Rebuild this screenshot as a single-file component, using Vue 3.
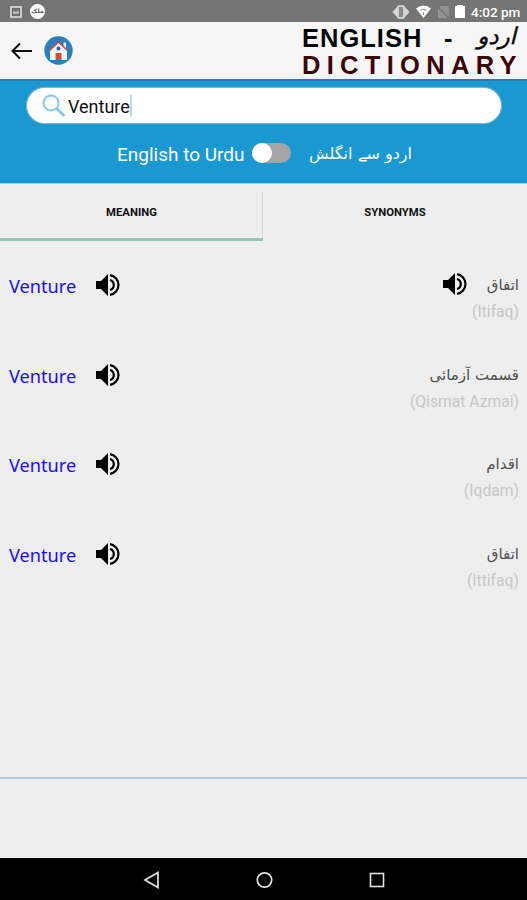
<template>
  <div class="screen">
    <!-- Status bar -->
    <div class="status-bar">
      <div class="status-left">
        <svg class="picture-icon" width="12" height="12" viewBox="0 0 12 12">
          <rect x="1" y="1" width="10" height="10" fill="#6d6d6d" stroke="#dedede" stroke-width="1.6" />
          <path d="M3 8V6l1.500-1.500L6 6l1.500-2L9 6v2z" fill="#b5b5b5" />
        </svg>
        <span class="app-badge">ملک</span>
      </div>
      <div class="status-right">
        <svg width="18" height="14" viewBox="0 0 18 14">
          <path d="M5 2v10L0.500 7zM13 2v10l4.500-5z" fill="#d8d8d8" />
          <rect x="6" y="1" width="6" height="12" rx="1" fill="#8a8a8a" stroke="#e4e4e4" stroke-width="1.600" />
        </svg>
        <svg width="15" height="13" viewBox="0 0 15 13">
          <path d="M0 3.500Q7.500-2.500 15 3.500L7.500 13z" fill="#fff" />
          <path d="M4.500 5.500Q7.500 3 10.500 5.500M7.500 7v3" fill="none" stroke="#999" stroke-width="1.200" />
        </svg>
        <svg width="11" height="12" viewBox="0 0 11 12">
          <path d="M3 0h8v12H0V3z" fill="#919191" />
          <path d="M0 1l11 11" stroke="#747474" stroke-width="1.500" />
        </svg>
        <svg width="10" height="13" viewBox="0 0 10 13">
          <path d="M0 1h2V0h6v1h2v12H0z" fill="#fff" />
        </svg>
        <span class="clock">4:02 pm</span>
      </div>
    </div>

    <!-- Header -->
    <header class="header">
      <svg class="back-icon" width="22" height="18" viewBox="0 0 22 18">
        <path d="M9 1.500L1.500 9 9 16.500M1.500 9H21" fill="none" stroke="#111" stroke-width="2" />
      </svg>
      <svg class="home-icon" width="29" height="29" viewBox="0 0 29 29">
        <circle cx="14.500" cy="14.500" r="14.200" fill="#2a80b9" />
        <path d="M19.500 6.500H22V13h-2.500z" fill="#e8edf4" />
        <path d="M14.500 6.500L6 14v10h17V14z" fill="#f4f6fa" />
        <path d="M5.500 14.500l9-8.500 9 8.500" fill="none" stroke="#c4474d" stroke-width="1.600" />
        <circle cx="14.500" cy="12.500" r="1.900" fill="#1c62bd" />
        <rect x="11.500" y="17" width="6" height="7" fill="#dc4a27" />
      </svg>
      <div class="brand">
        <div class="brand-top">
          <span class="brand-english">ENGLISH</span>
          <span class="brand-dash">-</span>
          <span class="brand-urdu" lang="ur" dir="rtl">اردو</span>
        </div>
        <div class="brand-bottom">DICTIONARY</div>
      </div>
    </header>

    <!-- Search panel -->
    <section class="search-panel">
      <div class="search-box">
        <svg class="search-icon" width="24" height="24" viewBox="0 0 24 24">
          <circle cx="9" cy="9" r="7.500" fill="none" stroke="#82c9e8" stroke-width="1.900" />
          <path d="M14.500 14.500l8 7.500" stroke="#82c9e8" stroke-width="2.600" />
        </svg>
        <span class="search-text">{{ query }}</span>
        <span class="caret"></span>
      </div>
      <div class="language-row">
        <span class="lang-english">English to Urdu</span>
        <span class="toggle" :class="{ on: urduFirst }" @click="urduFirst = !urduFirst"></span>
        <span class="lang-urdu" lang="ur" dir="rtl">اردو سے انگلش</span>
      </div>
    </section>

    <!-- Tabs -->
    <nav class="tabs">
      <div
        v-for="tab in tabs"
        :key="tab"
        class="tab"
        :class="{ active: tab === currentTab }"
        @click="currentTab = tab"
      >
        {{ tab }}
      </div>
    </nav>

    <!-- Results -->
    <main class="results">
      <div v-for="(item, i) in meanings" :key="i" class="result">
        <span class="word">{{ query }}</span>
        <svg class="speaker" width="26" height="24" viewBox="0 0 26 24">
          <path d="M1 8h5l7-7v22l-7-7H1z" fill="#000" />
          <path d="M15 7a5.200 5.200 0 0 1 0 10M15 2.200a9.900 9.900 0 0 1 0 19.600" fill="none" stroke="#000" stroke-width="2.200" />
        </svg>
        <div class="meaning">
          <div class="meaning-line">
            <svg v-if="item.audio" class="speaker" width="26" height="24" viewBox="0 0 26 24">
              <path d="M1 8h5l7-7v22l-7-7H1z" fill="#000" />
              <path d="M15 7a5.200 5.200 0 0 1 0 10M15 2.200a9.900 9.900 0 0 1 0 19.600" fill="none" stroke="#000" stroke-width="2.200" />
            </svg>
            <span class="urdu" lang="ur" dir="rtl">{{ item.urdu }}</span>
          </div>
          <div class="roman">({{ item.roman }})</div>
        </div>
      </div>
    </main>

    <div class="ad-space"></div>

    <!-- Navigation bar -->
    <footer class="nav-bar">
      <svg width="18" height="20" viewBox="0 0 18 20">
        <path d="M16 2.500v15L3 10z" fill="none" stroke="#e2e2e2" stroke-width="1.700" />
      </svg>
      <svg width="18" height="18" viewBox="0 0 18 18">
        <circle cx="9.500" cy="9" r="7.200" fill="none" stroke="#e2e2e2" stroke-width="1.700" />
      </svg>
      <svg width="18" height="18" viewBox="0 0 18 18">
        <rect x="2.500" y="2.500" width="13" height="13" fill="none" stroke="#e2e2e2" stroke-width="1.600" />
      </svg>
    </footer>
  </div>
</template>

<script setup>
import { ref } from 'vue'

const query = ref('Venture')
const urduFirst = ref(false)
const tabs = ['MEANING', 'SYNONYMS']
const currentTab = ref('MEANING')

const meanings = [
  { urdu: 'اتفاق', roman: 'Itifaq', audio: true },
  { urdu: 'قسمت آزمائی', roman: 'Qismat Azmai' },
  { urdu: 'اقدام', roman: 'Iqdam' },
  { urdu: 'اتفاق', roman: 'Ittifaq' }
]
</script>

<style>
body {
  margin: 0;
  background: #eee;
}
</style>

<style scoped>
.screen {
  width: 527px;
  height: 900px;
  display: flex;
  flex-direction: column;
  overflow: hidden;
  background: #eee;
  font-family: Roboto, "DejaVu Sans", sans-serif;
}

.screen svg {
  display: block;
  flex: none;
}

/* Status bar */
.status-bar {
  height: 22px;
  flex: none;
  box-sizing: border-box;
  padding: 1px 6px 0 10px;
  display: flex;
  justify-content: space-between;
  align-items: center;
  background: #757575;
}

.status-left,
.status-right {
  display: flex;
  align-items: center;
}

.status-left {
  gap: 8px;
}

.status-right svg {
  margin-right: 6px;
}

.status-right svg:nth-child(2) {
  margin-right: 7px;
}

.app-badge {
  width: 15px;
  height: 15px;
  border-radius: 50%;
  background: #fff;
  color: #555;
  font: bold 6px/14px "DejaVu Sans", sans-serif;
  text-align: center;
}

.clock {
  width: 50px;
  color: #fff;
  font-size: 13.500px;
  font-weight: 500;
  white-space: nowrap;
}

/* Header */
.header {
  height: 57px;
  flex: none;
  box-sizing: border-box;
  padding: 0 7px 0 11px;
  display: flex;
  align-items: center;
  background: #f6f6f6;
}

.home-icon {
  margin-left: 11px;
}

.brand {
  width: 218px;
  margin: 3px 0 0 auto;
  font-family: "Liberation Sans", "DejaVu Sans", sans-serif;
  font-weight: bold;
  font-size: 25.500px;
  line-height: 27px;
  white-space: nowrap;
}

.brand-top {
  display: flex;
  height: 27px;
  color: #060606;
}

.brand-english {
  width: 142px;
  letter-spacing: 1px;
}

.brand-urdu {
  margin: -2px 4px 0 auto;
  font: italic 23px/26px "DejaVu Sans", sans-serif;
  -webkit-text-stroke: 0.4px #060606;
}

.brand-bottom {
  color: #3d0508;
  letter-spacing: 6.300px;
}

/* Search panel */
.search-panel {
  height: 105px;
  flex: none;
  box-sizing: border-box;
  padding: 7px 26px 0 27px;
  border-top: 2px solid #1681b4;
  border-bottom: 1px solid #9ccde6;
  background: #1998d2;
}

.search-box {
  height: 35px;
  box-sizing: border-box;
  padding-left: 15px;
  display: flex;
  align-items: center;
  border-radius: 18px;
  background: #fff;
  box-shadow: 0 0 1px 1px #8fbbd1;
}

.search-text {
  margin: 1px 0 0 2px;
  font-size: 18px;
  color: #111;
}

.caret {
  width: 2px;
  height: 22px;
  background: #b5e0d6;
}

.language-row {
  height: 60px;
  padding-left: 90px;
  display: flex;
  align-items: center;
  color: #fff;
}

.lang-english {
  width: 135px;
  margin-top: 2px;
  font-size: 19px;
  white-space: nowrap;
}

.toggle {
  position: relative;
  width: 39px;
  height: 20px;
  border-radius: 10px;
  background: #a5a5a5;
}

.toggle::before {
  content: "";
  position: absolute;
  left: 0;
  top: 0;
  width: 20px;
  height: 20px;
  border-radius: 50%;
  background: #fff;
}

.toggle.on::before {
  left: 19px;
}

.lang-urdu {
  margin-left: 18px;
  font-family: "DejaVu Sans", sans-serif;
  font-size: 16px;
  white-space: nowrap;
}

/* Tabs */
.tabs {
  height: 57px;
  flex: none;
  display: flex;
}

.tab {
  flex: 1;
  box-sizing: border-box;
  border-bottom: 3px solid transparent;
  text-align: center;
  font-size: 11.300px;
  font-weight: 700;
  line-height: 57px;
  color: #111;
}

.tab.active {
  border-bottom-color: #9fc2b8;
}

.tab:first-child {
  flex: 0 0 263px;
  background: linear-gradient(#d8d8d8, #d8d8d8) right 8px / 1px 46px no-repeat;
}

/* Results */
.results {
  flex: 1;
  padding: 29px 8px 0 9px;
}

.result {
  height: 89.600px;
  display: flex;
  align-items: flex-start;
}

.word {
  width: 86px;
  font-family: "Noto Sans", sans-serif;
  font-size: 18.200px;
  line-height: 32px;
  color: #1a10e8;
}

.result .speaker {
  margin-top: 3px;
}

.meaning {
  margin-left: auto;
  text-align: right;
}

.meaning-line {
  height: 30px;
  display: flex;
  justify-content: flex-end;
}

.meaning-line .speaker {
  margin: 2px 19px 0 0;
}

.urdu {
  font-family: "DejaVu Sans", sans-serif;
  font-size: 15px;
  line-height: 30px;
  color: #505050;
}

.roman {
  font-size: 15.700px;
  line-height: 24px;
  color: #c6c6c6;
}

/* Empty banner strip above the navigation bar */
.ad-space {
  height: 79px;
  flex: none;
  border-top: 2px solid #b0cbdc;
}

.nav-bar {
  height: 42px;
  flex: none;
  box-sizing: border-box;
  padding: 1px 141px 0 142px;
  display: flex;
  align-items: center;
  justify-content: space-between;
  background: #000;
}
</style>
